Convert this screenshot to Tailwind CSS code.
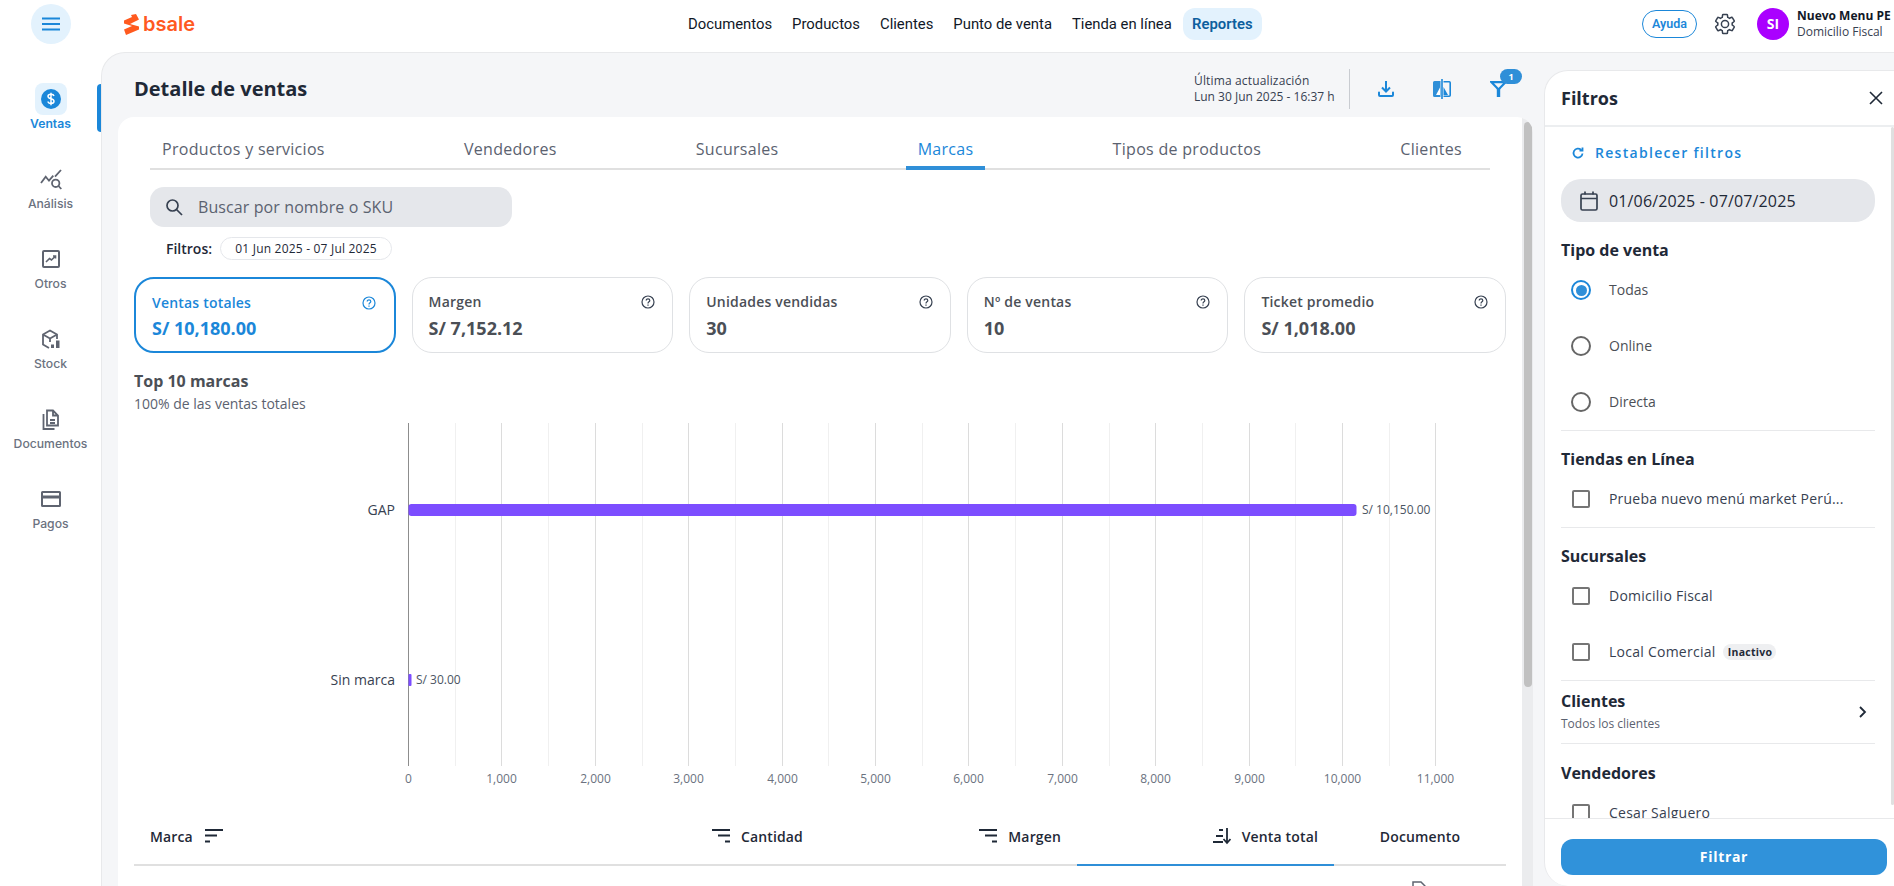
<!DOCTYPE html>
<html lang="es">
<head>
    <meta charset="UTF-8">
    <meta name="viewport" content="width=device-width, initial-scale=1.0">
    <title>Detalle de ventas</title>
    <script src="https://cdn.jsdelivr.net/npm/@tailwindcss/browser@4"></script>
</head>
<body class="bg-white h-screen overflow-hidden flex flex-col font-['Open_Sans',sans-serif] text-[#1f2937]">
    <!-- Top bar -->
    <header class="h-[52px] shrink-0 pb-1 flex items-center relative">
        <div class="w-[101px] flex justify-center">
            <button class="w-10 h-10 rounded-full bg-[#e3f2fd] flex items-center justify-center">
                <svg width="18" height="14" viewBox="0 0 18 14"><path d="M0 1.500h18M0 7h18M0 12.500h18" stroke="#1b87d9" stroke-width="2"/></svg>
            </button>
        </div>
        <div class="flex items-center ml-[23px] w-[564px] text-[#ff5a1f]">
            <svg width="15" height="21" viewBox="0 0 15 21"><path d="M12 0l3 5.500-9 4.500 9 2.500v3L2 21 0 15.500 8 12 0 9.500V6.500L8 3 7 1z" fill="#ff5a1f"/></svg>
            <span class="ml-[4px] font-['Inter',sans-serif] font-semibold text-[20px] leading-none">bsale</span>
        </div>
        <nav class="flex items-center font-['Roboto',sans-serif] text-[14.85px] text-[#111827] h-8">
            <a class="mr-5">Documentos</a>
            <a class="mr-5">Productos</a>
            <a class="mr-5">Clientes</a>
            <a class="mr-5">Punto de venta</a>
            <a class="mr-[11px]">Tienda en línea</a>
            <a class="h-8 w-[79px] justify-center rounded-xl bg-[#e3f2fd] flex items-center font-semibold text-[#0d5f9e]">Reportes</a>
        </nav>
        <div class="absolute left-[1642px] top-[8px] flex items-center">
            <button class="w-[55px] h-7 rounded-full border border-[#1b87d9] text-[#1b87d9] text-[12.5px] font-semibold font-['Roboto',sans-serif]">Ayuda</button>
            <svg class="ml-[16px]" width="24" height="24" viewBox="0 0 24 24" fill="none" stroke="#374151" stroke-width="1.500"><path d="M19.140 12.940c.04-.3.06-.61.06-.94 0-.32-.02-.64-.07-.94l2.030-1.580c.18-.14.23-.41.12-.61l-1.920-3.320c-.12-.22-.37-.29-.59-.22l-2.390.96c-.5-.38-1.030-.7-1.620-.94l-.36-2.540c-.04-.24-.24-.41-.48-.41h-3.840c-.24 0-.43.17-.47.41l-.36 2.540c-.59.24-1.130.57-1.620.94l-2.390-.96c-.22-.08-.47 0-.59.22L2.740 8.870c-.12.21-.08.47.12.61l2.030 1.580c-.05.3-.09.63-.09.94s.02.64.07.94l-2.030 1.580c-.18.14-.23.41-.12.61l1.920 3.320c.12.22.37.29.59.22l2.390-.96c.5.38 1.030.7 1.620.94l.36 2.540c.05.24.24.41.48.41h3.840c.24 0 .44-.17.47-.41l.36-2.540c.59-.24 1.130-.56 1.620-.94l2.390.96c.22.08.47 0 .59-.22l1.920-3.320c.12-.22.07-.47-.12-.61l-2.010-1.580zM12 15.600c-1.980 0-3.600-1.620-3.600-3.600s1.620-3.600 3.600-3.600 3.600 1.620 3.600 3.600-1.620 3.600-3.600 3.600z"/></svg>
            <div class="ml-[20px] w-8 h-8 rounded-full bg-[#aa00ff] text-white text-sm font-bold flex items-center justify-center">SI</div>
            <div class="ml-[8px] w-[96px] whitespace-nowrap overflow-hidden">
                <div class="text-[12px] leading-4 font-bold text-[#111827]">Nuevo Menu PE</div>
                <div class="text-[12px] leading-4 text-[#374151]">Domicilio Fiscal</div>
            </div>
        </div>
    </header>

    <div class="flex-1 min-h-0 flex">
        <!-- Sidebar -->
        <aside class="w-[101px] shrink-0 pt-[31px] relative font-['Inter',sans-serif] text-[12.2px] leading-[18px] font-medium text-[#6b7280]">
            <span class="absolute right-0 top-[32px] w-1 h-12 rounded-l bg-[#1b87d9]"></span>
            <div class="h-20 flex flex-col items-center">
                <span class="w-8 h-8 rounded-lg bg-[#e3f2fd] flex items-center justify-center">
                    <svg width="20" height="20" viewBox="0 0 20 20"><circle cx="10" cy="10" r="10" fill="#1b87d9"/><path d="M13 7c-.3-1.200-1.500-1.800-3-1.800S7 6 7 7.300s1.200 2 3 2.500 3 1.200 3 2.500-1.500 2.200-3 2.200-2.800-.7-3-2M10 3.800v12.400" fill="none" stroke="#fff" stroke-width="1.500"/></svg>
                </span>
                <span class="font-semibold text-[#1b87d9]">Ventas</span>
            </div>
            <div class="h-20 flex flex-col items-center">
                <span class="w-8 h-8 flex items-center justify-center">
                    <svg width="24" height="24" viewBox="0 0 24 24" fill="none" stroke="#5f6470" stroke-width="1.800"><path d="M2 16l4.700-6.300 3.300 4 4.300-5M16 9.700L22 3"/><circle cx="16.700" cy="16.300" r="3.700"/><path d="M19.500 19l2.800 3"/></svg>
                </span>
                <span>Análisis</span>
            </div>
            <div class="h-20 flex flex-col items-center">
                <span class="w-8 h-8 flex items-center justify-center">
                    <svg width="20" height="20" viewBox="0 0 20 20" fill="none" stroke="#5f6470"><rect x="2" y="2" width="16" height="16" rx="1" stroke-width="2"/><path d="M5 13l3.500-3.500 2 1.500 4-4M12 7h2.500v2.500" stroke-width="1.600"/></svg>
                </span>
                <span>Otros</span>
            </div>
            <div class="h-20 flex flex-col items-center">
                <span class="w-8 h-8 flex items-center justify-center">
                    <svg width="22" height="22" viewBox="0 0 22 22" fill="none" stroke="#5f6470" stroke-width="1.800"><path d="M9 20l-6-3.500V6.500L10 2.500l7 4V11M3 6.500l7 4 7-4M10 10.500V14"/><rect x="11" y="16.500" width="3" height="3.500" fill="#5f6470" stroke="none"/><rect x="16" y="12.500" width="3.500" height="7.500" fill="#5f6470" stroke="none"/></svg>
                </span>
                <span>Stock</span>
            </div>
            <div class="h-20 flex flex-col items-center">
                <span class="w-8 h-8 flex items-center justify-center">
                    <svg width="22" height="22" viewBox="0 0 22 22" fill="none" stroke="#5f6470" stroke-width="1.800"><path d="M7 2.500h6l5 5v10H7zM13 2.500v5h5M3.500 6v15h11M10 12h5M10 15h5"/></svg>
                </span>
                <span>Documentos</span>
            </div>
            <div class="h-20 flex flex-col items-center">
                <span class="w-8 h-8 flex items-center justify-center">
                    <svg width="22" height="18" viewBox="0 0 22 18"><path fill="#5f6470" d="M2.500 1h17A1.500 1.500 0 0 1 21 2.500v13a1.500 1.500 0 0 1-1.500 1.500h-17A1.500 1.500 0 0 1 1 15.500v-13A1.500 1.500 0 0 1 2.500 1zM3 3v2.500h16V3zM3 8.500V15h16V8.500z"/></svg>
                </span>
                <span>Pagos</span>
            </div>
        </aside>

        <!-- Main area -->
        <main class="flex-1 min-w-0 flex bg-[#f5f6f8] border-t border-l border-[#e8e9eb] rounded-tl-3xl">
            <section class="w-[1442px] shrink-0 flex flex-col">
                <div class="h-16 shrink-0 pt-2 flex items-center pl-[32px]">
                    <h1 class="w-[1060px] text-xl font-bold text-[#1f2937]">Detalle de ventas</h1>
                    <div class="w-[140px] text-[12px] leading-4 text-[#374151] whitespace-nowrap">
                        <div class="tracking-[0.15px]">Última actualización</div>
                        <div>Lun 30 Jun 2025 - 16:37 h</div>
                    </div>
                    <span class="ml-[15px] w-px h-10 bg-[#c9ccd1]"></span>
                    <svg class="ml-[28px]" width="16" height="16" viewBox="0 0 16 16" fill="none" stroke="#1b87d9" stroke-width="2"><path d="M8 0v10M4 6.500l4 4 4-4"/><path d="M1 11.500V14a1 1 0 0 0 1 1h12a1 1 0 0 0 1-1v-2.500" stroke-linecap="round"/></svg>
                    <svg class="ml-[39px]" width="18" height="20" viewBox="0 0 18 20"><path fill="#2f8fd8" d="M1.500 2h6v16h-6A1.500 1.500 0 0 1 0 16.500v-13A1.500 1.500 0 0 1 1.500 2z"/><path fill="#1b87d9" d="M8.200 0h1.600v20H8.200z"/><path fill="#fff" d="M7 8.500V16H3z"/><path fill="none" stroke="#1b87d9" stroke-width="1.600" d="M10.500 2.800h5.700a1 1 0 0 1 1 1v12.400a1 1 0 0 1-1 1h-5.700"/><path fill="#1b87d9" d="M10.500 8l4.500 8h-4.500z"/></svg>
                    <div class="relative ml-[39px]">
                        <svg class="block" width="17" height="16" viewBox="0 0 17 16"><path d="M1.500 1.200h14L8.500 8.500z" fill="none" stroke="#1b87d9" stroke-width="2.200"/><path d="M6.800 7h3.400v9H6.800z" fill="#1b87d9"/></svg>
                        <span class="absolute left-[10px] top-[-12px] w-[22px] h-[15px] rounded-full bg-[#2f8fd8] text-white text-[9px] leading-[15px] text-center font-bold">1</span>
                    </div>
                </div>

                <!-- White card -->
                <div class="ml-[16px] w-[1415px] flex-1 min-h-0 bg-white rounded-t-2xl overflow-hidden flex">
                    <div class="w-[1404px] shrink-0">
                        <div class="ml-[32px] w-[1340px] h-[53px] pr-4 border-b-2 border-[#e0e0e0] flex justify-between text-base font-medium text-[#5b6270] tracking-[0.3px]">
                            <a class="px-3 h-[53px] pt-[20px] leading-6">Productos y servicios</a>
                            <a class="px-3 h-[53px] pt-[20px] leading-6">Vendedores</a>
                            <a class="px-3 h-[53px] pt-[20px] leading-6">Sucursales</a>
                            <a class="px-3 h-[53px] pt-[20px] leading-6 text-[#1b87d9] border-b-4 border-[#2f8fd8]">Marcas</a>
                            <a class="px-3 h-[53px] pt-[20px] leading-6">Tipos de productos</a>
                            <a class="px-3 h-[53px] pt-[20px] leading-6">Clientes</a>
                        </div>
                        <div class="ml-[32px] mt-[17px] w-[362px] h-10 rounded-[14px] bg-[#e5e7eb] flex items-center pl-[14px] text-base text-[#5b6270] tracking-[0.1px]">
                            <svg width="20" height="20" viewBox="0 0 20 20" fill="none" stroke="#374151" stroke-width="1.700"><circle cx="8.500" cy="8.500" r="5.500"/><path d="M12.500 12.500L18 18"/></svg>
                            <span class="ml-[14px]">Buscar por nombre o SKU</span>
                        </div>
                        <div class="ml-[48px] mt-[10px] h-[23px] flex items-center">
                            <span class="text-[14px] font-semibold text-[#1f2937]">Filtros:</span>
                            <span class="ml-2 w-[172px] h-[23px] rounded-full border border-[#e5e7eb] text-[12px] tracking-[0.2px] font-medium text-center leading-[21px]">01 Jun 2025 - 07 Jul 2025</span>
                        </div>

                        <!-- KPI cards -->
                        <div class="ml-4 mt-[17px] w-[1372px] grid grid-cols-5 gap-4">
                            <div class="h-[76px] rounded-[20px] border-2 border-[#1b87d9] pl-4 pr-[18px] pt-[12px] text-[#1b87d9]">
                                <div class="flex items-center justify-between h-6 text-sm font-semibold tracking-[0.2px]">Ventas totales
                                    <svg width="14" height="14" viewBox="0 0 14 14"><circle cx="7" cy="7" r="6" fill="none" stroke="#1b87d9" stroke-width="1.200"/><path d="M5.200 5.500c0-2.300 3.600-2.300 3.600 0 0 1.400-1.800 1.300-1.800 3M7 9.500v1.300" fill="none" stroke="#1b87d9" stroke-width="1.200"/></svg>
                                </div>
                                <div class="mt-[1px] text-lg leading-6 font-bold">S/ 10,180.00</div>
                            </div>
                            <div class="h-[76px] rounded-[20px] border border-[#dfe1e4] pl-4 pr-[17px] pt-[12px] text-[#4b4f56]">
                                <div class="flex items-center justify-between h-6 text-sm font-semibold tracking-[0.2px]">Margen
                                    <svg width="14" height="14" viewBox="0 0 14 14"><circle cx="7" cy="7" r="6" fill="none" stroke="#374151" stroke-width="1.200"/><path d="M5.200 5.500c0-2.300 3.600-2.300 3.600 0 0 1.400-1.800 1.300-1.800 3M7 9.500v1.300" fill="none" stroke="#374151" stroke-width="1.200"/></svg>
                                </div>
                                <div class="mt-[2px] text-lg leading-6 font-bold">S/ 7,152.12</div>
                            </div>
                            <div class="h-[76px] rounded-[20px] border border-[#dfe1e4] pl-4 pr-[17px] pt-[12px] text-[#4b4f56]">
                                <div class="flex items-center justify-between h-6 text-sm font-semibold tracking-[0.2px]">Unidades vendidas
                                    <svg width="14" height="14" viewBox="0 0 14 14"><circle cx="7" cy="7" r="6" fill="none" stroke="#374151" stroke-width="1.200"/><path d="M5.200 5.500c0-2.300 3.600-2.300 3.600 0 0 1.400-1.800 1.300-1.800 3M7 9.500v1.300" fill="none" stroke="#374151" stroke-width="1.200"/></svg>
                                </div>
                                <div class="mt-[2px] text-lg leading-6 font-bold">30</div>
                            </div>
                            <div class="h-[76px] rounded-[20px] border border-[#dfe1e4] pl-4 pr-[17px] pt-[12px] text-[#4b4f56]">
                                <div class="flex items-center justify-between h-6 text-sm font-semibold tracking-[0.2px]">Nº de ventas
                                    <svg width="14" height="14" viewBox="0 0 14 14"><circle cx="7" cy="7" r="6" fill="none" stroke="#374151" stroke-width="1.200"/><path d="M5.200 5.500c0-2.300 3.600-2.300 3.600 0 0 1.400-1.800 1.300-1.800 3M7 9.500v1.300" fill="none" stroke="#374151" stroke-width="1.200"/></svg>
                                </div>
                                <div class="mt-[2px] text-lg leading-6 font-bold">10</div>
                            </div>
                            <div class="h-[76px] rounded-[20px] border border-[#dfe1e4] pl-4 pr-[17px] pt-[12px] text-[#4b4f56]">
                                <div class="flex items-center justify-between h-6 text-sm font-semibold tracking-[0.2px]">Ticket promedio
                                    <svg width="14" height="14" viewBox="0 0 14 14"><circle cx="7" cy="7" r="6" fill="none" stroke="#374151" stroke-width="1.200"/><path d="M5.200 5.500c0-2.300 3.600-2.300 3.600 0 0 1.400-1.800 1.300-1.800 3M7 9.500v1.300" fill="none" stroke="#374151" stroke-width="1.200"/></svg>
                                </div>
                                <div class="mt-[2px] text-lg leading-6 font-bold">S/ 1,018.00</div>
                            </div>
                        </div>

                        <div class="ml-4 mt-[16px] text-base leading-6 font-bold text-[#4b4f56]">Top 10 marcas</div>
                        <div class="ml-4 text-sm leading-[22px] text-[#5b6270]">100% de las ventas totales</div>

                        <!-- Chart -->
                        <svg class="ml-4 block" width="1372" height="375" viewBox="0 0 1372 375" font-family="Open Sans, sans-serif">
                            <g stroke="#f0f0f0">
                                <path d="M321.500 8v343M414.500 8v343M508.500 8v343M601.500 8v343M694.500 8v343M788.500 8v343M881.500 8v343M975.500 8v343M1068.500 8v343M1161.500 8v343M1255.500 8v343"/>
                            </g>
                            <g stroke="#dcdcdc">
                                <path d="M367.500 8v343M461.500 8v343M554.500 8v343M648.500 8v343M741.500 8v343M834.500 8v343M928.500 8v343M1021.500 8v343M1115.500 8v343M1208.500 8v343M1301.500 8v343"/>
                            </g>
                            <path d="M274.500 8v343" stroke="#8d8d8d"/>
                            <rect x="274.500" y="89" width="948" height="12" rx="3" fill="#7c4dff"/>
                            <rect x="274.500" y="259" width="3" height="12" rx="1" fill="#7c4dff"/>
                            <g font-size="14" fill="#374151" text-anchor="end">
                                <text x="261" y="100">GAP</text>
                                <text x="261" y="270">Sin marca</text>
                            </g>
                            <g font-size="12" fill="#4b5563">
                                <text x="1228" y="99">S/ 10,150.00</text>
                                <text x="282" y="269">S/ 30.00</text>
                            </g>
                            <g font-size="12" fill="#6b7280" text-anchor="middle">
                                <text x="274.500" y="368">0</text>
                                <text x="367.500" y="368">1,000</text>
                                <text x="461.500" y="368">2,000</text>
                                <text x="554.500" y="368">3,000</text>
                                <text x="648.500" y="368">4,000</text>
                                <text x="741.500" y="368">5,000</text>
                                <text x="834.500" y="368">6,000</text>
                                <text x="928.500" y="368">7,000</text>
                                <text x="1021.500" y="368">8,000</text>
                                <text x="1115.500" y="368">9,000</text>
                                <text x="1208.500" y="368">10,000</text>
                                <text x="1301.500" y="368">11,000</text>
                            </g>
                        </svg>

                        <!-- Table header -->
                        <div class="ml-4 mt-[16px] w-[1372px] h-[60px] flex text-[14px] font-semibold text-[#1f2937] tracking-[0.15px]">
                            <div class="w-[427px] pl-4 pt-[2px] flex items-center border-b-2 border-[#e0e0e0]">Marca
                                <svg class="ml-3" width="18" height="14" viewBox="0 0 18 14"><path d="M0 1h18M0 6.500h12M0 12.500h5" stroke="#1f2937" stroke-width="2.200"/></svg>
                            </div>
                            <div class="w-[258px] pr-4 pt-[2px] flex items-center justify-end border-b-2 border-[#e0e0e0]">
                                <svg class="mr-[11px]" width="18" height="14" viewBox="0 0 18 14"><path d="M0 1h18M6 6.500h12M13 12.500h5" stroke="#1f2937" stroke-width="2.200"/></svg>Cantidad
                            </div>
                            <div class="w-[258px] pr-4 pt-[2px] flex items-center justify-end border-b-2 border-[#e0e0e0]">
                                <svg class="mr-[11px]" width="18" height="14" viewBox="0 0 18 14"><path d="M0 1h18M6 6.500h12M13 12.500h5" stroke="#1f2937" stroke-width="2.200"/></svg>Margen
                            </div>
                            <div class="w-[257px] pr-4 pt-[2px] flex items-center justify-end border-b-2 border-[#2f8fd8]">
                                <svg class="mr-[11px]" width="18" height="18" viewBox="0 0 18 18"><path d="M6 3h4M3 9h7M0 15h10" stroke="#1f2937" stroke-width="2"/><path d="M14 1v14M10.500 12l3.500 4 3.500-4" fill="none" stroke="#1f2937" stroke-width="1.800"/></svg>Venta total
                            </div>
                            <div class="w-[172px] pt-[2px] flex items-center justify-center border-b-2 border-[#e0e0e0]">Documento</div>
                        </div>
                        <svg class="ml-[1294px] mt-[15px]" width="14" height="18" viewBox="0 0 14 18" fill="none" stroke="#5f6470" stroke-width="1.500"><path d="M1 1h8l4 4v12H1z"/></svg>
                    </div>
                    <!-- Card scrollbar -->
                    <div class="w-[11px] shrink-0 bg-[#ebecee] pt-[5px] pl-[2px]">
                        <div class="w-2 h-[565px] rounded-full bg-[#c1c1c1]"></div>
                    </div>
                </div>
            </section>

            <!-- Filter panel -->
            <aside class="flex-1 min-w-0 mt-[17px] bg-white border-l border-t border-[#e8e9eb] rounded-l-3xl flex flex-col overflow-hidden">
                <div class="h-[56px] shrink-0 border-b-2 border-[#eceef0] flex items-center justify-between pl-4 pr-[11px]">
                    <h2 class="text-lg font-bold text-[#1f2937]">Filtros</h2>
                    <svg width="14" height="14" viewBox="0 0 14 14"><path d="M1 1l12 12M13 1L1 13" stroke="#1f2937" stroke-width="1.600"/></svg>
                </div>
                <div class="flex-1 min-h-0 flex overflow-hidden">
                    <div class="w-[346px] shrink-0 pl-4">
                        <div class="w-[314px]">
                            <div class="h-[52px] pl-[11px] flex items-center text-sm font-semibold tracking-[1.3px] text-[#1b87d9]">
                                <svg width="12" height="12" viewBox="0 0 12 12" fill="none" stroke="#1b87d9" stroke-width="1.800"><path d="M10.500 6.500A4.500 4.500 0 1 1 9 2.700M10.500 .5v3h-3"/></svg>
                                <span class="ml-[11px]">Restablecer filtros</span>
                            </div>
                            <div class="h-[43px] rounded-[20px] bg-[#e5e7eb] flex items-center pl-[19px] text-base text-[#1f2937] tracking-[0.15px]">
                                <svg width="18" height="20" viewBox="0 0 18 20" fill="none" stroke="#374151" stroke-width="1.700"><rect x="1" y="3" width="16" height="16" rx="1.500"/><path d="M1 7.500h16M5 .5v3M13 .5v3"/></svg>
                                <span class="ml-[11px]">01/06/2025 - 07/07/2025</span>
                            </div>

                            <h3 class="mt-4 text-base leading-6 font-bold">Tipo de venta</h3>
                            <div class="h-14 flex items-center pl-[10px] text-sm text-[#4b4f56]">
                                <span class="w-5 h-5 rounded-full border-2 border-[#1b87d9] flex items-center justify-center"><span class="w-[11px] h-[11px] rounded-full bg-[#2f8fd8]"></span></span>
                                <span class="ml-[18px]">Todas</span>
                            </div>
                            <div class="h-14 flex items-center pl-[10px] text-sm text-[#4b4f56]">
                                <span class="w-5 h-5 rounded-full border-2 border-[#666]"></span>
                                <span class="ml-[18px]">Online</span>
                            </div>
                            <div class="h-14 flex items-center pl-[10px] text-sm text-[#4b4f56]">
                                <span class="w-5 h-5 rounded-full border-2 border-[#666]"></span>
                                <span class="ml-[18px]">Directa</span>
                            </div>

                            <h3 class="border-t border-[#e8e9eb] pt-4 text-base leading-6 font-bold box-content">Tiendas en Línea</h3>
                            <div class="h-14 flex items-center pl-[11px] text-sm text-[#374151]">
                                <span class="w-[18px] h-[18px] rounded-[2px] border-2 border-[#757575]"></span>
                                <span class="ml-[19px] tracking-[0.2px]">Prueba nuevo menú market Perú...</span>
                            </div>

                            <h3 class="border-t border-[#e8e9eb] pt-4 text-base leading-6 font-bold box-content">Sucursales</h3>
                            <div class="h-14 flex items-center pl-[11px] text-sm text-[#374151] tracking-[0.25px]">
                                <span class="w-[18px] h-[18px] rounded-[2px] border-2 border-[#757575]"></span>
                                <span class="ml-[19px]">Domicilio Fiscal</span>
                            </div>
                            <div class="h-14 flex items-center pl-[11px] text-sm text-[#374151] tracking-[0.25px]">
                                <span class="w-[18px] h-[18px] rounded-[2px] border-2 border-[#757575]"></span>
                                <span class="ml-[19px]">Local Comercial</span>
                                <span class="ml-2 w-[53px] h-4 rounded-full bg-[#eeeff1] text-[10.5px] leading-4 text-center font-bold text-[#1f2937]">Inactivo</span>
                            </div>

                            <div class="h-[64px] border-y border-[#e8e9eb] flex items-center justify-between pr-[8px]">
                                <div>
                                    <div class="text-base leading-6 font-bold -mt-[1px]">Clientes</div>
                                    <div class="text-[12px] leading-5 text-[#5b6270] mt-[1px]">Todos los clientes</div>
                                </div>
                                <svg width="10" height="12" viewBox="0 0 10 12" fill="none" stroke="#1f2937" stroke-width="1.800"><path d="M3 1l5 5-5 5"/></svg>
                            </div>

                            <h3 class="pt-[17px] text-base leading-6 font-bold box-content">Vendedores</h3>
                            <div class="h-14 flex items-center pl-[11px] text-sm text-[#374151] tracking-[0.25px]">
                                <span class="w-[18px] h-[18px] rounded-[2px] border-2 border-[#757575]"></span>
                                <span class="ml-[19px]">Cesar Salguero</span>
                            </div>
                        </div>
                    </div>
                    <div class="w-[3px] h-[678px] rounded-full bg-[#e0e0e0]"></div>
                </div>
                <div class="h-[68px] shrink-0 border-t border-[#e8e9eb] pt-5 pl-4">
                    <button class="w-[326px] h-9 rounded-xl bg-[#3092da] text-white text-sm font-bold tracking-[0.7px]">Filtrar</button>
                </div>
            </aside>
        </main>
    </div>
</body>
</html>
